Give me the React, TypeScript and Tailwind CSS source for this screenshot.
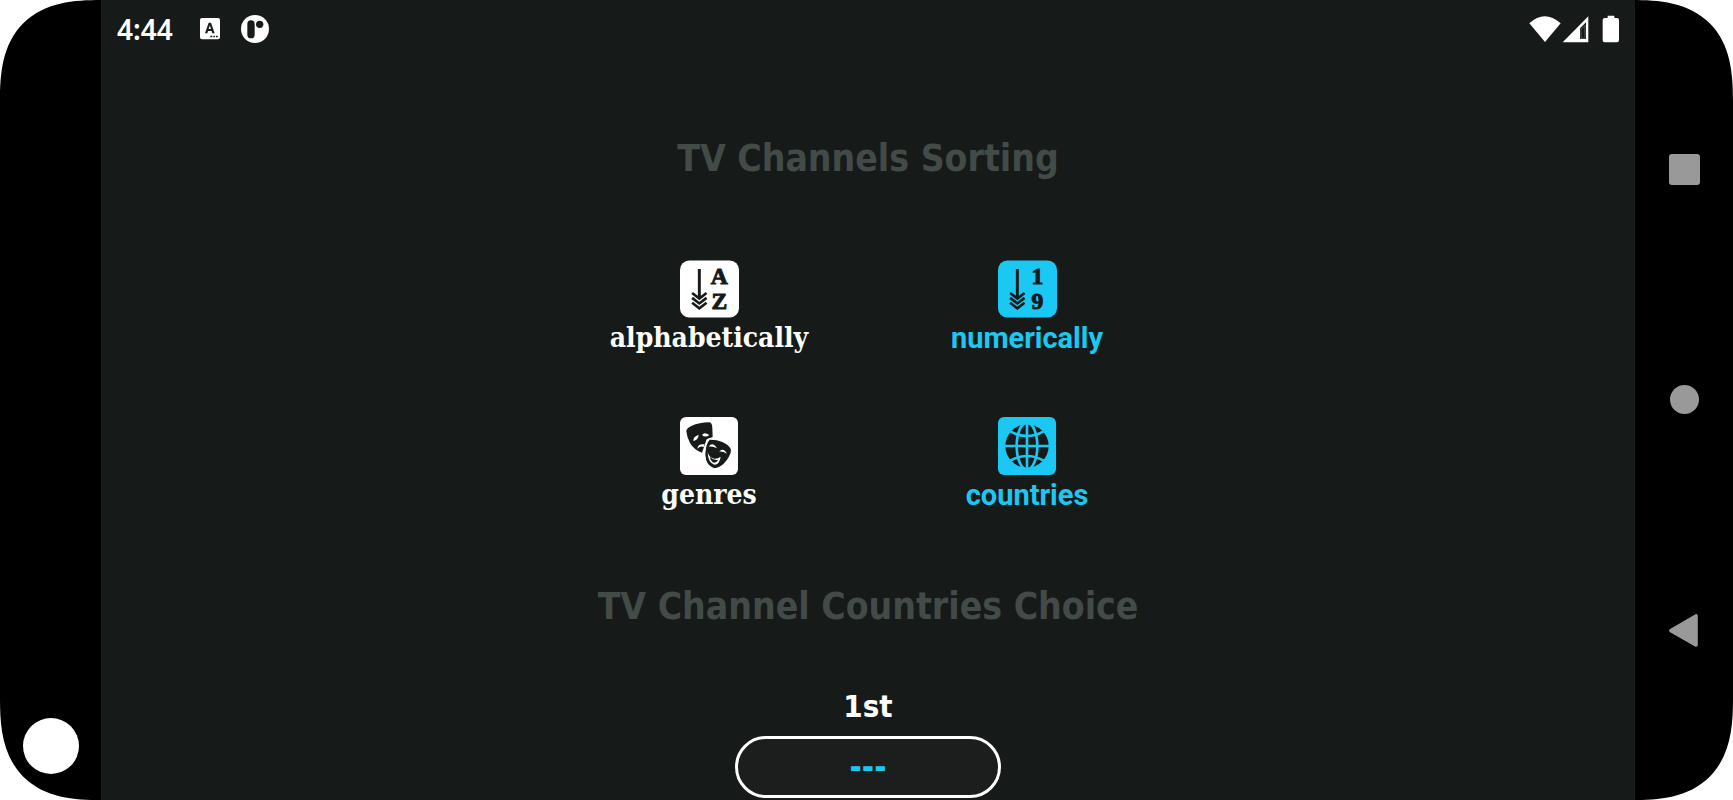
import { ReactNode } from "react";

const TITLE_FONT = "font-['DejaVu_Sans_Condensed','DejaVu_Sans',sans-serif]";

export default function App() {
  return (
    <div className="bg-white">
      <div className="flex h-screen overflow-hidden rounded-[101px] bg-black [corner-shape:superellipse(1.4)]">
        <aside className="flex w-[101px] shrink-0 flex-col items-center justify-end pb-[26px]">
          <span className="size-14 rounded-full bg-white" />
        </aside>
        <main className="flex min-w-0 flex-1 flex-col overflow-hidden bg-[#161a19]">
          <StatusBar />
          <SortingSection />
          <CountriesSection />
        </main>
        <NavigationBar />
      </div>
    </div>
  );
}

function StatusBar() {
  return (
    <header className="flex h-[58px] shrink-0 items-center justify-between px-4 text-white">
      <div className="flex items-center">
        <time className="font-['Noto_Sans',Roboto,sans-serif] text-[28px] leading-8 font-semibold">4:44</time>
        <svg className="ml-[27px] h-[22px] w-5" viewBox="0 0 60 66" role="img" aria-label="Keyboard">
          <rect width="60" height="64" rx="6" fill="#fff" />
          <path d="M15 46 26 14h7l11 32h-7l-2-7H24l-2 7zm11-13h7l-3.500-11z" fill="#161a19" />
          <path d="M31 53h6v5h-6zm9 0h5v5h-5zm8 0h5v5h-5z" fill="#161a19" />
        </svg>
        <svg className="ml-[21px] size-7" viewBox="0 0 84 84" role="img" aria-label="App notification">
          <circle cx="42" cy="42" r="42" fill="#fff" />
          <rect x="19" y="16" width="22" height="54" rx="11" fill="#161a19" />
          <circle cx="56" cy="28" r="11" fill="#161a19" />
        </svg>
      </div>
      <svg className="h-7 w-[90px]" viewBox="0 0 270 84" fill="#fff" role="img" aria-label="Wi-Fi, signal and battery">
        <path d="M1 25Q47-17 95 25L48 81z" />
        <path d="M101 82 178 4v78z" />
        <path d="M153 72h18V22l-18 18z" fill="#161a19" />
        <path d="M156 70h12V31l-12 12z" fill="#161a19" stroke="#777" strokeWidth="2" />
        <path d="M236 2h20v7h8q6 0 6 6v61q0 6-6 6h-37q-6 0-6-6V15q0-6 6-6h9z" />
      </svg>
    </header>
  );
}

function SectionTitle(props: { children: ReactNode }) {
  return <h2 className={`text-center text-[37px] leading-12 font-bold text-[#434b48] ${TITLE_FONT}`}>{props.children}</h2>;
}

function SortingSection() {
  return (
    <section className="pt-[77px]">
      <SectionTitle>TV Channels Sorting</SectionTitle>
      <div className="mx-auto mt-[77px] grid w-[636px] grid-cols-2 gap-y-[59px]">
        <SortButton label="alphabetically" icon={<SortIcon first="A" last="Z" />} />
        <SortButton label="numerically" icon={<SortIcon first="1" last="9" />} active />
        <SortButton label="genres" icon={<MasksIcon />} />
        <SortButton label="countries" icon={<GlobeIcon />} active />
      </div>
    </section>
  );
}

function SortButton(props: { label: string; icon: ReactNode; active?: boolean }) {
  const labelStyle = props.active
    ? "font-[Roboto,sans-serif] text-[29px] font-bold"
    : "font-['DejaVu_Serif_Condensed','DejaVu_Serif',serif] text-[28px] font-bold";
  return (
    <button
      type="button"
      aria-pressed={!!props.active}
      className={`flex flex-col items-center ${props.active ? "text-[#1ac8f3]" : "text-white"}`}
    >
      {props.icon}
      <span className={`leading-10 ${labelStyle}`}>{props.label}</span>
    </button>
  );
}

function SortIcon(props: { first: string; last: string }) {
  return (
    <svg className="h-[58px] w-[59px]" viewBox="0 0 180 174" aria-hidden="true">
      <rect width="180" height="174" rx="28" fill="currentColor" />
      <g stroke="#161a19" fill="none">
        <path d="M59 26v86" strokeWidth="9" />
        <path d="M37 99l22 17 22-17M37 114l22 17 22-17M37 129l22 17 22-17" strokeWidth="8" />
      </g>
      <g
        fill="#161a19"
        stroke="#161a19"
        strokeWidth="3"
        textAnchor="middle"
        className="font-['Liberation_Serif',serif] text-[72px] font-bold"
      >
        <text x="120" y="72">{props.first}</text>
        <text x="120" y="149">{props.last}</text>
      </g>
    </svg>
  );
}

function MasksIcon() {
  return (
    <svg className="size-[58px]" viewBox="0 0 174 174" aria-hidden="true">
      <rect width="174" height="174" rx="18" fill="currentColor" />
      <path d="M19 43Q19 34 34 27Q58 16 88 16Q96 17 97 32L98 60 80 67 66 107Q42 99 30 78Q21 62 19 43z" fill="#161a19" />
      <path d="M40 72Q39 59 56 53Q55 69 40 72zM66 54Q73 43 88 54Q76 63 66 54zM52 95Q54 79 74 82L71 90Q62 85 52 95z" fill="#fff" />
      <path
        d="M88 66Q109 65 128 73T155 96Q157 112 142 131Q125 154 103 156Q83 151 76 129Q71 111 76 91Q80 73 88 66z"
        fill="#161a19"
        stroke="#fff"
        strokeWidth="5"
      />
      <path d="M86 89Q98 73 111 94Q97 86 86 89zM117 104Q130 90 141 110Q128 102 117 104z" fill="#fff" />
      <path d="M83 106Q88 123 103 125Q113 126 122 119Q119 142 103 143Q84 138 83 106z" fill="#fff" />
      <path d="M89 119Q101 132 115 128Q110 137 102 137Q92 133 89 119z" fill="#161a19" />
    </svg>
  );
}

function GlobeIcon() {
  return (
    <svg className="size-[58px]" viewBox="0 0 174 174" aria-hidden="true">
      <rect width="174" height="174" rx="18" fill="currentColor" />
      <circle cx="87" cy="87" r="65" fill="#161a19" />
      <g stroke="currentColor" strokeWidth="8" fill="none">
        <path d="M20 87h134M87 20v134M37 43q50 28 100 0M37 131q50-28 100 0" />
        <ellipse cx="87" cy="87" rx="31" ry="70" />
      </g>
    </svg>
  );
}

function CountriesSection() {
  return (
    <section className="flex flex-col items-center pt-[68px]">
      <SectionTitle>TV Channel Countries Choice</SectionTitle>
      <label htmlFor="first-country" className={`mt-[55px] text-[31px] leading-10 font-bold text-white ${TITLE_FONT}`}>
        1st
      </label>
      <select
        id="first-country"
        className={`mt-[10px] h-[62px] w-[266px] shrink-0 appearance-none rounded-full border-[3px] border-white bg-[#1b1e1d] text-center text-[33px] font-bold text-[#1ac8f3] [text-align-last:center] ${TITLE_FONT}`}
      >
        <option>---</option>
      </select>
    </section>
  );
}

function NavigationBar() {
  return (
    <nav className="flex w-[98px] shrink-0 flex-col items-center justify-between pt-[154px] pb-[153px]">
      <button type="button" aria-label="Recent apps" className="size-[31px] rounded-[3px] bg-[#999]" />
      <button type="button" aria-label="Home" className="size-[29px] rounded-full bg-[#999]" />
      <button type="button" aria-label="Back" className="text-[#999]">
        <svg className="h-[33px] w-[30px]" viewBox="0 0 90 99" aria-hidden="true">
          <path d="M6 50 81 6v87z" fill="currentColor" stroke="currentColor" strokeWidth="11" strokeLinejoin="round" />
        </svg>
      </button>
    </nav>
  );
}
